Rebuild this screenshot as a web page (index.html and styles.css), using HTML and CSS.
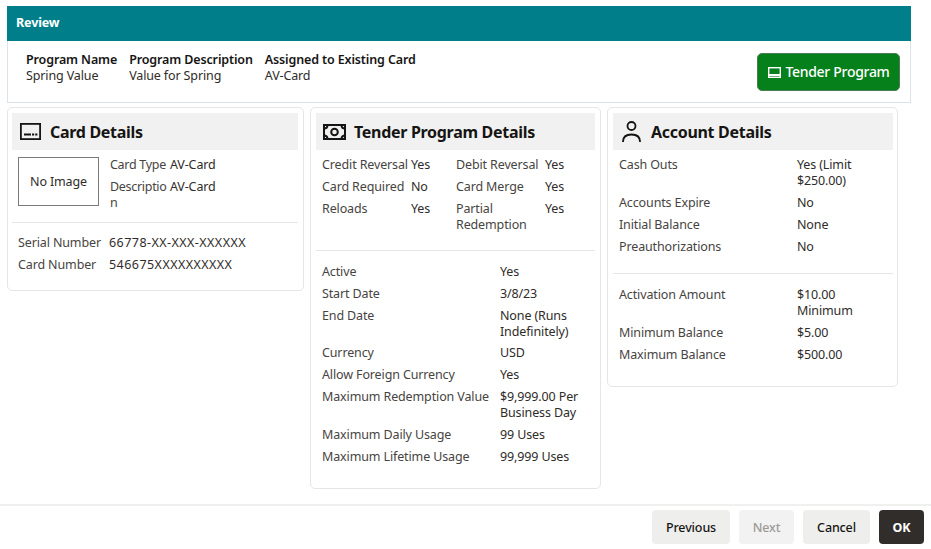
FILE: index.html
```html
<!DOCTYPE html>
<html lang="en">
<head>
<meta charset="utf-8">
<title>Review</title>
<link rel="stylesheet" href="styles.css">
</head>
<body>
<main class="page">
  <header class="titlebar">Review</header>
  <section class="summary">
    <div class="summary-item"><b>Program Name</b><span>Spring Value</span></div>
    <div class="summary-item"><b>Program Description</b><span>Value for Spring</span></div>
    <div class="summary-item"><b>Assigned to Existing Card</b><span>AV-Card</span></div>
    <button class="tender-btn" type="button">
      <svg width="13" height="11" viewBox="0 0 13 11" fill="none" stroke="currentColor" stroke-width="1.4"><rect x="0.700" y="0.700" width="11.600" height="9.600"/><path d="M1 8h11" stroke-width="2"/></svg>
      Tender Program
    </button>
  </section>
  <div class="cards">
    <article class="card card-a">
      <h2 class="card-head">
        <svg class="head-icon" width="21" height="17" viewBox="0 0 21 17" fill="none" stroke="#161513" stroke-width="1.8"><rect x="0.900" y="0.900" width="19.200" height="15.200"/><path d="M4 11.500h7M12 11.500h2.200M15.200 11.500h2.200"/></svg>
        <span>Card Details</span>
      </h2>
      <div class="image-row">
        <div class="no-image">No Image</div>
        <dl class="kv kv-narrow">
          <dt>Card Type</dt><dd>AV-Card</dd>
          <dt>Description</dt><dd>AV-Card</dd>
        </dl>
      </div>
      <hr class="rule rule-a">
      <dl class="kv kv-serial">
        <dt>Serial Number</dt><dd>66778-XX-XXX-XXXXXX</dd>
        <dt>Card Number</dt><dd>546675XXXXXXXXXX</dd>
      </dl>
    </article>
    <article class="card card-b">
      <h2 class="card-head">
        <svg class="head-icon" width="23" height="16" viewBox="0 0 23 16" fill="none" stroke="#161513" stroke-width="2"><rect x="1" y="1" width="21" height="14"/><circle cx="11.500" cy="8" r="3.300"/><path d="M1 4.500c2 0 3.500-1.500 3.500-3.500M22 4.500c-2 0-3.500-1.500-3.500-3.500M1 11.500c2 0 3.500 1.500 3.500 3.500M22 11.500c-2 0-3.500 1.500-3.500 3.500"/></svg>
        <span>Tender Program Details</span>
      </h2>
      <div class="flags">
        <dl class="kv kv-flag-a">
          <dt>Credit Reversal</dt><dd>Yes</dd>
          <dt>Card Required</dt><dd>No</dd>
          <dt>Reloads</dt><dd>Yes</dd>
        </dl>
        <dl class="kv kv-flag-b">
          <dt>Debit Reversal</dt><dd>Yes</dd>
          <dt>Card Merge</dt><dd>Yes</dd>
          <dt>Partial Redemption</dt><dd>Yes</dd>
        </dl>
      </div>
      <hr class="rule rule-b">
      <dl class="kv kv-wide">
        <dt>Active</dt><dd>Yes</dd>
        <dt>Start Date</dt><dd>3/8/23</dd>
        <dt>End Date</dt><dd class="tight">None (Runs Indefinitely)</dd>
        <dt>Currency</dt><dd>USD</dd>
        <dt>Allow Foreign Currency</dt><dd>Yes</dd>
        <dt>Maximum Redemption Value</dt><dd>$9,999.00 Per Business Day</dd>
        <dt>Maximum Daily Usage</dt><dd>99 Uses</dd>
        <dt>Maximum Lifetime Usage</dt><dd>99,999 Uses</dd>
      </dl>
    </article>
    <article class="card card-c">
      <h2 class="card-head">
        <svg class="head-icon" width="19" height="21" viewBox="0 0 19 21" fill="none" stroke="#161513" stroke-width="1.800"><circle cx="9.500" cy="5" r="4"/><path d="M0.900 21c0-5 3.500-7.500 8.600-7.500s8.600 2.500 8.600 7.500"/></svg>
        <span>Account Details</span>
      </h2>
      <dl class="kv kv-wide">
        <dt>Cash Outs</dt><dd>Yes (Limit $250.00)</dd>
        <dt>Accounts Expire</dt><dd>No</dd>
        <dt>Initial Balance</dt><dd>None</dd>
        <dt>Preauthorizations</dt><dd>No</dd>
      </dl>
      <hr class="rule rule-c">
      <dl class="kv kv-wide">
        <dt>Activation Amount</dt><dd>$10.00 Minimum</dd>
        <dt>Minimum Balance</dt><dd>$5.00</dd>
        <dt>Maximum Balance</dt><dd>$500.00</dd>
      </dl>
    </article>
  </div>
</main>
<footer class="footer">
  <button class="btn btn-prev" type="button">Previous</button>
  <button class="btn btn-disabled" type="button" disabled>Next</button>
  <button class="btn btn-cancel" type="button">Cancel</button>
  <button class="btn btn-primary" type="button">OK</button>
</footer>
</body>
</html>
```
FILE: styles.css
```css
* { box-sizing: border-box; }
html, body { margin: 0; height: 100%; }
body {
  width: 931px;
  height: 549px;
  overflow: hidden;
  display: flex;
  flex-direction: column;
  background: #fff;
  color: #2f2c29;
  font-family: "Noto Sans", "Open Sans", sans-serif;
  font-size: 12.500px;
  letter-spacing: -0.130px;
  line-height: 16px;
}
.page { flex: 1; padding: 6px 20px 0 7px; }
.titlebar {
  width: 904px;
  height: 35px;
  padding: 0 9px 2px;
  display: flex;
  align-items: center;
  background: #007f8a;
  color: #fff;
  font-weight: 700;
  font-size: 12.500px;
}
.summary {
  width: 904px;
  height: 62px;
  display: flex;
  align-items: flex-start;
  gap: 12px;
  padding: 11px 10px 0 18px;
  border: 1px solid #dce3e8;
  border-top: 0;
}
.summary-item { display: flex; flex-direction: column; }
.summary-item b { font-weight: 600; color: #161513; }
.tender-btn {
  margin-left: auto;
  margin-top: 1px;
  width: 143px;
  height: 38px;
  padding: 0 0 0 1px;
  display: flex;
  align-items: center;
  justify-content: center;
  gap: 4px;
  background: #06801a;
  border: 1px solid #4f7a55;
  border-radius: 5px;
  color: #fff;
  font: 500 14px/16px "Noto Sans", sans-serif;
  letter-spacing: -0.300px;
}
.cards { display: flex; align-items: flex-start; gap: 6px; margin-top: 4px; }
.card {
  padding: 5px 5px 0;
  border: 1px solid #e6e6e4;
  border-radius: 5px;
  background: #fff;
}
.card-a { width: 297px; height: 184px; padding-left: 4px; }
.card-b { width: 291px; height: 382px; }
.card-c { width: 291px; height: 280px; padding-right: 4px; }
.card-head {
  height: 37px;
  margin: 0 0 7px;
  display: grid;
  grid-template-columns: 37px 1fr;
  column-gap: 1px;
  align-items: center;
  background: #f1f1f1;
  color: #161513;
  font-size: 16px;
  font-weight: 700;
  line-height: 20px;
  letter-spacing: -0.300px;
}
.head-icon { justify-self: center; }
.kv {
  margin: 0;
  padding: 0 6px;
  display: grid;
  row-gap: 6px;
  align-content: start;
}
.kv dt, .kv dd { margin: 0; }
.kv dd { color: #2f2c29; }
.kv dt { color: #47443f; }
.kv dd.tight { margin-bottom: -1px; }
.image-row { display: flex; gap: 5px; padding-left: 6px; height: 65px; }
.no-image {
  flex: none;
  width: 81px;
  height: 49px;
  display: flex;
  align-items: center;
  justify-content: center;
  border: 1px solid #7b7b7b;
}
.kv-narrow { grid-template-columns: 60px 1fr; flex: 1; }
.kv-narrow dt { overflow-wrap: anywhere; letter-spacing: -0.300px; }
.kv-serial { grid-template-columns: 91px 1fr; padding-top: 12px; }
.kv-serial dd { letter-spacing: 0.450px; }
.rule { margin: 0; border: 0; border-top: 1px solid #e6e6e4; }
.flags { display: grid; grid-template-columns: 134px 1fr; height: 93px; }
.kv-flag-a, .kv-flag-b { grid-template-columns: 89px 1fr; }
.kv-wide { grid-template-columns: 178px 1fr; }
.rule-b + .kv-wide, .rule-c + .kv-wide { padding-top: 13px; }
.rule-c { margin-top: 18px; }
.footer {
  height: 45px;
  flex: none;
  padding: 4px 7px 0 0;
  display: flex;
  justify-content: flex-end;
  gap: 9px;
  border-top: 2px solid #f0f0ef;
}
.btn {
  height: 34px;
  width: 55px;
  padding: 1px 0 0;
  background: #eeeeed;
  border: 0;
  border-radius: 4px;
  color: #161513;
  font: 500 12.500px/16px "Noto Sans", sans-serif;
  letter-spacing: -0.130px;
}
.btn-prev { width: 78px; }
.btn-cancel { width: 67px; }
.btn-disabled { background: #f2f2f2; color: #9c9a98; }
.btn-primary { width: 45px; background: #312d2a; color: #fff; font-weight: 700; }
```
